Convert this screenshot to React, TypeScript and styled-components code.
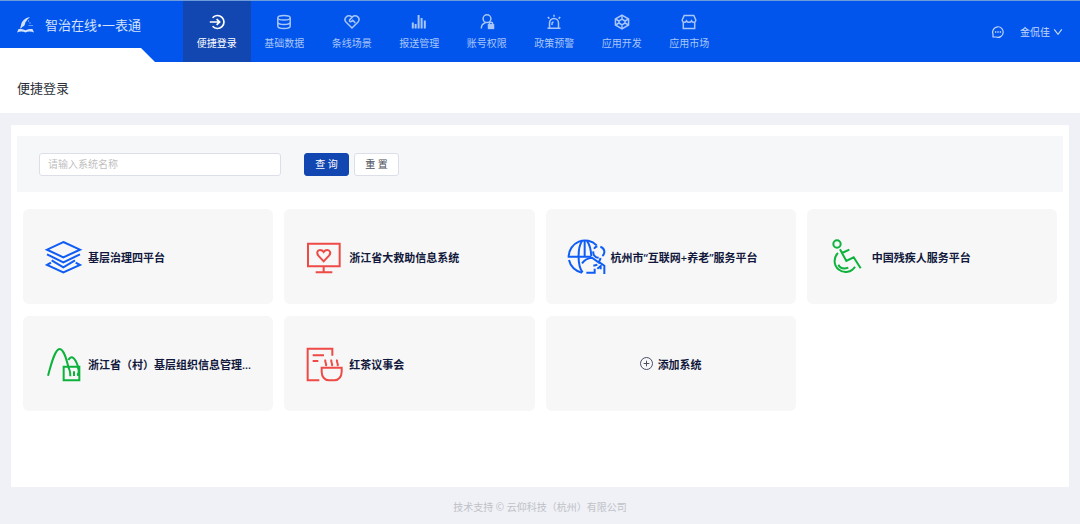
import React from 'react';
import styled, { createGlobalStyle } from 'styled-components';

const GlobalStyle = createGlobalStyle`
  *, *::before, *::after { box-sizing: border-box; }
  body {
    margin: 0;
    background: #eff1f6;
    color: #2b2f38;
    font-family: "Open Sans", "Noto Sans CJK SC", sans-serif;
    font-size: 10px;
    line-height: 16px;
  }
  button, input { font: inherit; }
  a { color: inherit; text-decoration: none; }
`;

const Page = styled.div`
  min-height: 100vh;
  display: flex;
  flex-direction: column;
`;

const Header = styled.header`
  display: flex;
  height: 62px;
  background: #0154ec;
  border-top: 1px solid #6d9bdc;
`;

const Brand = styled.div`
  flex: none;
  width: 183px;
  height: 48px;
  padding-left: 17px;
  display: flex;
  align-items: center;
  gap: 11px;
  color: #d3e2fc;
  font-size: 13px;
  white-space: nowrap;
`;

const Nav = styled.nav`
  flex: none;
  width: 50%;
  display: flex;
`;

const NavItem = styled.a<{ $active?: boolean }>`
  flex: 1;
  display: flex;
  flex-direction: column;
  align-items: center;
  justify-content: center;
  gap: 5px;
  padding-top: 2px;
  background: ${(p) => (p.$active ? '#1246b0' : 'transparent')};
  color: ${(p) => (p.$active ? '#ffffff' : '#a8c6fa')};
`;

const Account = styled.div`
  flex: 1;
  display: flex;
  align-items: center;
  justify-content: flex-end;
  gap: 16px;
  padding-right: 18px;
  color: #c4d8fc;
`;

const PlainButton = styled.button`
  display: flex;
  align-items: center;
  gap: 4px;
  padding: 0;
  border: 0;
  background: none;
  color: inherit;
  cursor: pointer;
`;

const TitleBar = styled.div`
  position: relative;
  height: 51px;
  padding-left: 17px;
  display: flex;
  align-items: center;
  background: #ffffff;

  &::before {
    content: '';
    position: absolute;
    left: 0;
    bottom: 100%;
    width: 155px;
    height: 14px;
    background: #ffffff;
    clip-path: polygon(0 0, 141px 0, 100% 100%, 0 100%);
  }
`;

const Title = styled.h1`
  margin: 0;
  font-size: 13px;
  font-weight: 400;
`;

const Panel = styled.main`
  flex: 1;
  margin: 12px 11px 0;
  padding: 11px 6px;
  background: #ffffff;
`;

const Search = styled.form`
  display: flex;
  align-items: center;
  height: 56px;
  padding: 0 22px;
  background: #f5f7f9;
`;

const SearchInput = styled.input`
  width: 242px;
  height: 23px;
  margin-right: 23px;
  padding: 0 8px;
  border: 1px solid #dcdfe8;
  border-radius: 3px;
  background: #ffffff;
  color: #1f2329;
  outline: none;
  &::placeholder { color: #bfbfbf; opacity: 1; }
`;

const ActionButton = styled.button<{ $primary?: boolean }>`
  width: 45px;
  height: 23px;
  margin-right: 5px;
  padding: 0;
  border: 1px solid ${(p) => (p.$primary ? '#1246b0' : '#dcdfe8')};
  border-radius: 3px;
  background: ${(p) => (p.$primary ? '#1246b0' : '#ffffff')};
  color: ${(p) => (p.$primary ? '#ffffff' : '#4a4f5c')};
  cursor: pointer;
`;

const Grid = styled.div`
  display: grid;
  grid-template-columns: repeat(4, minmax(0, 1fr));
  gap: 12px 11px;
  padding: 17px 6px 0;
`;

const Card = styled.a`
  display: flex;
  align-items: center;
  gap: 5px;
  height: 95px;
  padding: 0 16px 0 22px;
  border-radius: 6px;
  background: #f7f7f7;
  color: #11183c;
  font-size: 11px;
  font-weight: 600;
`;

const AddCard = styled.button`
  display: flex;
  align-items: center;
  justify-content: center;
  gap: 5px;
  height: 95px;
  padding: 0;
  border: 0;
  border-radius: 6px;
  background: #f7f7f7;
  color: #11183c;
  font-size: 11px;
  font-weight: 600;
  cursor: pointer;
`;

const CardName = styled.span`
  min-width: 0;
  padding-top: 2px;
  white-space: nowrap;
`;

const Footer = styled.footer`
  display: flex;
  align-items: center;
  justify-content: center;
  height: 37px;
  padding-top: 2px;
  color: #bfc1c6;
`;

const Glyph = styled.svg<{ $size: number }>`
  flex: none;
  width: ${(p) => p.$size}px;
  height: ${(p) => p.$size}px;
  fill: none;
  stroke: currentColor;
  overflow: visible;
`;

const CardGlyph = styled(Glyph)<{ $tint: string }>`
  color: ${(p) => p.$tint};
  stroke-width: 6px;
`;

const AddGlyph = styled(Glyph)`
  color: #4a4f66;
`;

const navItems: { label: string; icon: React.ReactNode }[] = [
  {
    label: '便捷登录',
    icon: (
      <>
        <path d="M3.6 3.7A6.5 6.5 0 1 1 3.6 12.3" strokeWidth="1.7" />
        <path d="M.8 8H10M7.600 5.200 10.600 8 7.600 10.800" strokeWidth="1.7" />
      </>
    ),
  },
  {
    label: '基础数据',
    icon: (
      <>
        <ellipse cx="8" cy="3.800" rx="6.200" ry="2.300" />
        <path d="M1.800 4v8c0 1.400 2.700 2.500 6.200 2.500s6.200-1.100 6.200-2.500V4M1.800 8c0 1.400 2.700 2.500 6.200 2.500s6.200-1.100 6.200-2.500" />
      </>
    ),
  },
  {
    label: '条线场景',
    icon: (
      <>
        <path d="M8 14 2.2 8.3a3.9 3.9 0 0 1 0-5.4 3.8 3.8 0 0 1 5.4 0L8 3.3l.4-.4a3.8 3.8 0 0 1 5.4 0 3.9 3.9 0 0 1 0 5.4Z" />
        <path d="M8 3.4 5.5 6c-.5 1.4 1.1 2.1 2 1.3l1.200-1 2.600 2.600" />
      </>
    ),
  },
  {
    label: '报送管理',
    icon: (
      <path d="M1.800 14.500V8.600M4.600 14.500V10M7.600 14.500V1M10.600 14.500V4M13.800 14.500V6.500" strokeWidth="2" />
    ),
  },
  {
    label: '账号权限',
    icon: (
      <>
        <circle cx="8" cy="4.700" r="3.900" />
        <path d="M2.300 14.500c0-3 1.600-5 4.200-5.800" />
        <path d="M10.300 10.500V9.900a1.700 1.700 0 0 1 3.400 0v.6" />
        <rect x="9.500" y="10.800" width="5" height="3.600" fill="currentColor" />
      </>
    ),
  },
  {
    label: '政策预警',
    icon: (
      <>
        <path d="M3.500 14V9a4.500 4.500 0 0 1 9 0v5M1.500 14.300h13M8 .8v2M1.800 3l1.600 1.600M14.200 3l-1.600 1.600" />
        <path d="M6 11V9.800c0-.9.600-1.500 1.500-1.700" />
      </>
    ),
  },
  {
    label: '应用开发',
    icon: (
      <>
        <path d="M8 1.200 14.600 5v6L8 14.800 1.400 11V5Z" />
        <path d="M8 1.200v4M8 10.800v4M1.400 5 5 7M14.600 5 11 7M1.400 11 5 9M14.600 11 11 9M8 5.200 11 7v2l-3 1.800L5 9V7Z" />
      </>
    ),
  },
  {
    label: '应用市场',
    icon: (
      <>
        <path d="M3.200 1.500h9.600l1.900 4.300c.3 1.500-.7 2.500-1.900 2.500-1.100 0-1.900-.7-2.300-1.500-.5.9-1.400 1.500-2.500 1.500s-2-.6-2.500-1.500C5.100 7.600 4.300 8.300 3.200 8.300 2 8.300 1 7.300 1.300 5.800Z" />
        <path d="M2.300 8.200V14.500h11.400V8.200" />
      </>
    ),
  },
];

const BLUE = '#0f5df5';
const RED = '#ee4b47';
const GREEN = '#0cb23c';

const systems: { name: string; tint: string; icon: React.ReactNode }[] = [
  {
    name: '基层治理四平台',
    tint: BLUE,
    icon: (
      <path d="M55 12 105 35 55 58 6 35ZM6 49 55 73 105 49M20 67 55 88 90 67M18 74 6 81 55 103 105 81 92 74" />
    ),
  },
  {
    name: '浙江省大救助信息系统',
    tint: RED,
    icon: (
      <>
        <path d="M6 17H101V85H6ZM53 87V101M29 103H79" />
        <path d="M53 70 37 53C31 45 34 36 42 36 48 36 51 39 53 42 55 39 58 36 64 36 72 36 76 45 69 53Z" />
      </>
    ),
  },
  {
    name: '杭州市“互联网+养老”服务平台',
    tint: BLUE,
    icon: (
      <>
        <path d="M86 22A49 49 0 0 0 2 56H70M3 66A49 49 0 0 0 42 104" />
        <path d="M42 9C28 30 28 84 44 103M57 9C65 20 69 36 70 54M50 8V56" />
        <path d="M78 32A16 16 0 0 1 88 25M97 26A16 16 0 0 1 103 54M92 59A16 16 0 0 1 76 40" />
        <path d="M42 76C50 64 62 60 72 59L96 76M98 60 93 72 109 83V108M55 104H80V92M76 83 88 80M88 92 98 84V94" />
      </>
    ),
  },
  {
    name: '中国残疾人服务平台',
    tint: GREEN,
    icon: (
      <>
        <circle cx="24" cy="18" r="11" />
        <path d="M33 34 52 69 74 58 95 91M39 45 61 35M27 45A33 33 0 1 0 78 86M28 80C34 91 44 94 58 89" />
      </>
    ),
  },
  {
    name: '浙江省（村）基层组织信息管理...',
    tint: GREEN,
    icon: (
      <>
        <path d="M9 92C19 55 30 12 44 12 56 12 64 42 70 65M70 45C80 28 91 40 99 65" />
        <path d="M56 65H103V106H56ZM68 65C75 72 76 82 76 94M87 79V93M98 66C104 78 101 88 96 90" />
      </>
    ),
  },
  {
    name: '红茶议事会',
    tint: RED,
    icon: (
      <>
        <path d="M40 106H5V11H79V32M20 31H54M20 48H37" />
        <path d="M47 68H107V80C107 96 97 106 85 106H69C57 106 47 96 47 80Z" />
        <path d="M59 44C53 51 65 55 59 63M77 44C71 51 83 55 77 63M94 44C88 51 100 55 94 63" />
      </>
    ),
  },
];

export default function App() {
  return (
    <Page>
      <GlobalStyle />
      <Header>
        <Brand>
          <Glyph $size={17} viewBox="0 0 17 17" aria-hidden="true">
            <path
              d="M13 0C8 .8 4.300 4.500 4 8.500L3 11.500C4.800 11.500 5 9.800 6.500 9.300 7.800 8.800 7.600 7.600 8.300 6.600 7.600 6.600 8.600 4.600 9.600 4 9.200 3.500 11 2 13 0Z"
              fill="currentColor"
              stroke="none"
            />
            <path d="M11.500 3v2M12 6h2M11.500 8.500h4.500" strokeWidth=".8" opacity=".6" />
            <path
              d="M1.500 12 0 15.500C3 14.300 6 14.300 8.500 15.500 11 14.300 14 14.300 17 15.500L15.500 12C13 11.800 10.500 12.300 8.500 13.300 6.500 12.300 4 11.800 1.500 12Z"
              fill="currentColor"
              stroke="none"
            />
          </Glyph>
          <span>智治在线•一表通</span>
        </Brand>
        <Nav>
          {navItems.map((item, i) => (
            <NavItem key={item.label} href="#" $active={i === 0}>
              <Glyph $size={16} viewBox="0 0 16 16" strokeWidth="1.5" aria-hidden="true">
                {item.icon}
              </Glyph>
              {item.label}
            </NavItem>
          ))}
        </Nav>
        <Account>
          <PlainButton type="button" aria-label="消息">
            <Glyph $size={12} viewBox="0 0 12 12" aria-hidden="true">
              <path d="M1 11V8A5.300 5.300 0 1 1 4 11Z" strokeWidth="1.200" />
              <path d="M2.900 6h1.400M5.300 6h1.400M7.700 6h1.400" strokeWidth="1.400" />
            </Glyph>
          </PlainButton>
          <PlainButton type="button">
            金侃佳
            <Glyph $size={8} viewBox="0 0 8 8" aria-hidden="true">
              <path d="M.2 1.300 4 6.300 7.800 1.300" strokeWidth="1.200" />
            </Glyph>
          </PlainButton>
        </Account>
      </Header>
      <TitleBar>
        <Title>便捷登录</Title>
      </TitleBar>
      <Panel>
        <Search onSubmit={(e) => e.preventDefault()}>
          <SearchInput aria-label="系统名称" placeholder="请输入系统名称" />
          <ActionButton type="submit" $primary>
            查 询
          </ActionButton>
          <ActionButton type="reset">重 置</ActionButton>
        </Search>
        <Grid>
          {systems.map((s) => (
            <Card key={s.name} href="#">
              <CardGlyph $size={38} $tint={s.tint} viewBox="0 0 114 114" aria-hidden="true">
                {s.icon}
              </CardGlyph>
              <CardName>{s.name}</CardName>
            </Card>
          ))}
          <AddCard type="button">
            <AddGlyph $size={13} viewBox="0 0 13 13" aria-hidden="true">
              <path d="M12.500 6.500A6 6 0 1 1 .5 6.500 6 6 0 0 1 12.500 6.500ZM6.500 3.700V9.300M3.700 6.500H9.300" />
            </AddGlyph>
            <CardName>添加系统</CardName>
          </AddCard>
        </Grid>
      </Panel>
      <Footer>技术支持 © 云仰科技（杭州）有限公司</Footer>
    </Page>
  );
}
